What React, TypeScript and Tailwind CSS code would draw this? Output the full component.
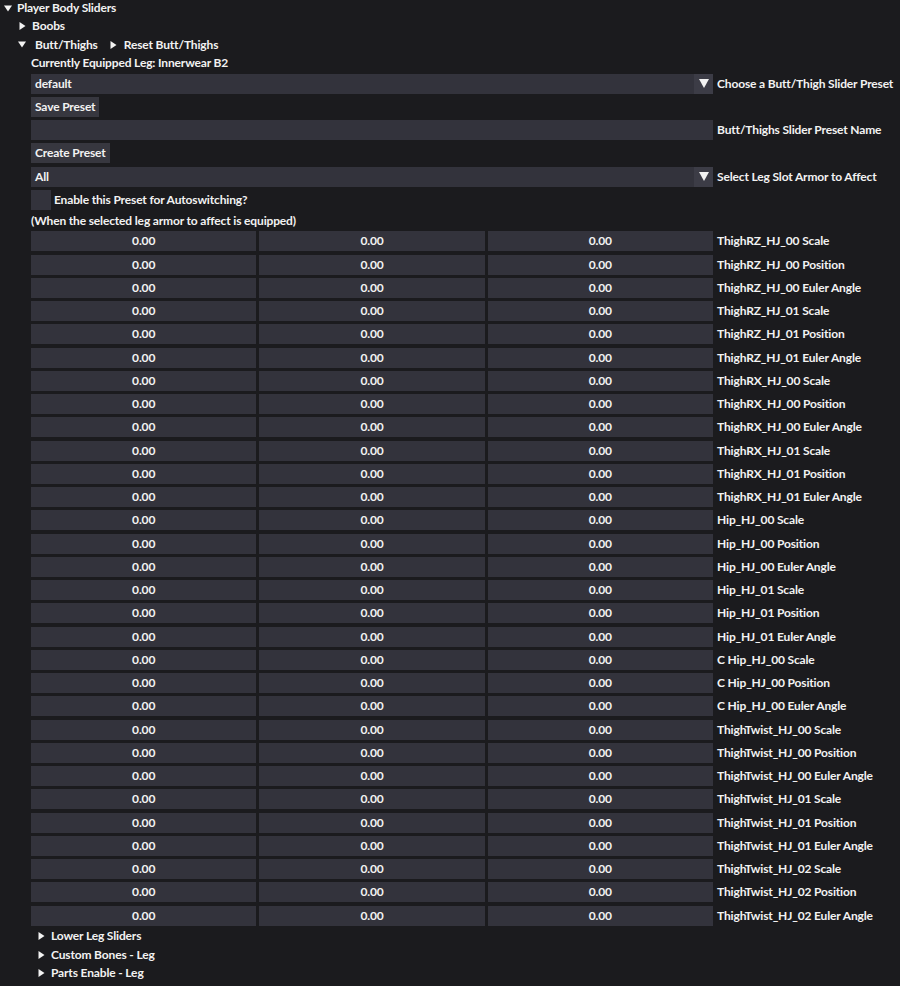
import React from "react";

const FONT = { fontFamily: "Lato, 'Noto Sans', sans-serif" };

const BONES = [
  "ThighRZ_HJ_00",
  "ThighRZ_HJ_01",
  "ThighRX_HJ_00",
  "ThighRX_HJ_01",
  "Hip_HJ_00",
  "Hip_HJ_01",
  "C Hip_HJ_00",
  "ThighTwist_HJ_00",
  "ThighTwist_HJ_01",
  "ThighTwist_HJ_02",
];
const PARTS = ["Scale", "Position", "Euler Angle"];

function Arrow({ open }: { open?: boolean }) {
  return open ? (
    <svg width="8" height="7" viewBox="0 0 8 7" className="shrink-0">
      <polygon points="0,0.5 8,0.5 4,6.5" fill="#f2f2f2" />
    </svg>
  ) : (
    <svg width="7" height="8" viewBox="0 0 7 8" className="shrink-0">
      <polygon points="0.5,0 6.5,4 0.5,8" fill="#f2f2f2" />
    </svg>
  );
}

function Node({ label, open, pad }: { label: string; open?: boolean; pad: string }) {
  return (
    <div className={`flex items-center h-[15px] ${pad}`}>
      <div className="w-[13px] flex justify-start">
        <Arrow open={open} />
      </div>
      <span>{label}</span>
    </div>
  );
}

function Labeled({ label, children }: { label: string; children: React.ReactNode }) {
  return (
    <div className="flex items-center h-[20px]">
      <div className="w-[682px] shrink-0 h-full">{children}</div>
      <span className="ml-[4px] whitespace-nowrap">{label}</span>
    </div>
  );
}

function Combo({ value }: { value: string }) {
  return (
    <div className="flex h-full bg-[#33333c]">
      <div className="flex-1 flex items-center px-[4px]">{value}</div>
      <div className="w-[19px] bg-[#3c3c46] flex items-center justify-center">
        <svg width="10" height="9" viewBox="0 0 10 9">
          <polygon points="0,0 10,0 5,9" fill="#f2f2f2" />
        </svg>
      </div>
    </div>
  );
}

function Button({ label }: { label: string }) {
  return (
    <div className="flex">
      <div className="h-[20px] flex items-center px-[4px] bg-[#37373f]">{label}</div>
    </div>
  );
}

export default function App() {
  return (
    <div
      className="w-[900px] h-[986px] overflow-hidden bg-[#1b1b1e] text-[#f2f2f2] text-[12px] tracking-[-0.15px] font-bold leading-none flex flex-col gap-[3.25px] pt-[0.5px]"
      style={FONT}
    >
      <Node label="Player Body Sliders" open pad="pl-[4px]" />
      <Node label="Boobs" pad="pl-[19px]" />
      <div className="flex items-center h-[15px] pl-[18px]">
        <div className="w-[17px]">
          <Arrow open />
        </div>
        <span>Butt/Thighs</span>
        <div className="ml-[12px] w-[14px]">
          <Arrow />
        </div>
        <span>Reset Butt/Thighs</span>
      </div>

      <div className="pl-[31px] flex flex-col gap-[3.25px]">
        <div className="h-[15px] flex items-center">Currently Equipped Leg: Innerwear B2</div>
        <Labeled label="Choose a Butt/Thigh Slider Preset">
          <Combo value="default" />
        </Labeled>
        <Button label="Save Preset" />
        <Labeled label="Butt/Thighs Slider Preset Name">
          <div className="h-full bg-[#33333c]" />
        </Labeled>
        <Button label="Create Preset" />
        <Labeled label="Select Leg Slot Armor to Affect">
          <Combo value="All" />
        </Labeled>
        <div className="flex items-center h-[20px]">
          <div className="w-[20px] h-[20px] bg-[#33333c]" />
          <span className="ml-[3px]">Enable this Preset for Autoswitching?</span>
        </div>
        <div className="h-[15px] flex items-center">(When the selected leg armor to affect is equipped)</div>

        {BONES.flatMap((b) =>
          PARTS.map((p) => (
            <Labeled key={b + p} label={`${b} ${p}`}>
              <div className="grid grid-cols-3 gap-[3px] h-full">
                {[0, 1, 2].map((i) => (
                  <div key={i} className="bg-[#33333c] flex items-center justify-center">
                    0.00
                  </div>
                ))}
              </div>
            </Labeled>
          ))
        )}

        <Node label="Lower Leg Sliders" pad="pl-[7px]" />
        <Node label="Custom Bones - Leg" pad="pl-[7px]" />
        <Node label="Parts Enable - Leg" pad="pl-[7px]" />
      </div>
    </div>
  );
}
